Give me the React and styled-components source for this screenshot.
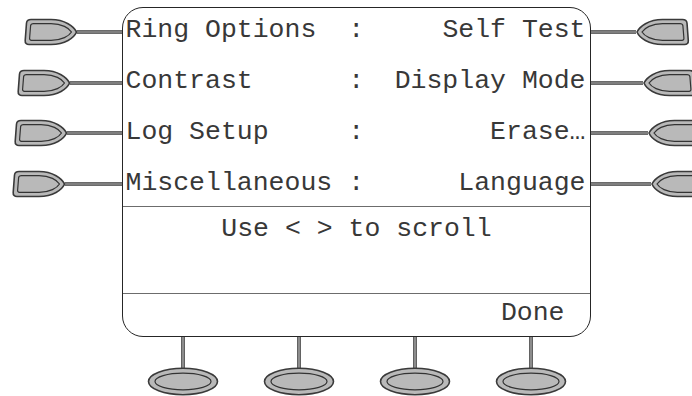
import React from "react";
import styled, { createGlobalStyle } from "styled-components";

const menu = [
  { left: "Ring Options", right: "Self Test" },
  { left: "Contrast", right: "Display Mode" },
  { left: "Log Setup", right: "Erase…" },
  { left: "Miscellaneous", right: "Language" },
];

// horizontal place of each soft key, read off the drawing
const leftKeys = [24, 17, 14, 12];
const rightKeys = [45, 52, 57, 60];
const bottomKeys = [1, 2, 3, 4];

const KEY_OUTER =
  "M7 1 H27 C41 1 50 8 52.5 13.5 C50 19.5 41 26 27 26 H5 C2.5 26 1 24.5 1.2 22 L2.5 4.5 C2.8 2.3 4.5 1 7 1 Z";
const KEY_INNER =
  "M9.5 5.2 H27 C38 5.2 45 9.5 47.5 13.5 C45 17.5 38 21.8 27 21.8 H7.5 C6 21.8 5.5 20.8 5.6 19.8 L6.6 7.2 C6.8 5.9 7.8 5.2 9.5 5.2 Z";

const GlobalStyle = createGlobalStyle`
  html, body {
    margin: 0;
    padding: 0;
    background: #fff;
  }
`;

const Page = styled.div`
  width: 692px;
  height: 396px;
  overflow: hidden;
  display: flex;
  flex-direction: column;
`;

const TopSection = styled.div`
  display: flex;
  align-items: flex-start;
`;

const KeyColumn = styled.div`
  width: ${(p) => p.$width}px;
  flex-shrink: 0;
  display: flex;
  flex-direction: column;
  gap: 4.5px;
  padding-top: 9px;
  overflow: hidden;
`;

const Display = styled.section`
  box-sizing: border-box;
  width: 469px;
  height: 330px;
  margin-top: 7px;
  flex-shrink: 0;
  border: 1.5px solid #262626;
  border-radius: 21px;
  display: flex;
  flex-direction: column;
  font-family: "Courier New", "Liberation Mono", monospace;
  font-size: 26.5px;
  color: #383838;
`;

const Menu = styled.div`
  display: flex;
  flex-direction: column;
  gap: 7px;
  padding: 0 4.5px 1px 2.5px;
`;

const MenuRow = styled.div`
  height: 44px;
  display: flex;
  align-items: center;
  white-space: pre;
`;

const LeftLabel = styled.span`
  width: 14ch;
`;

const Colon = styled.span`
  width: 1ch;
`;

const RightLabel = styled.span`
  flex: 1;
  text-align: right;
`;

const Divider = styled.div`
  height: 0;
  border-top: 1.6px solid #6c6c6c;
`;

const Hint = styled.div`
  flex: 1;
  padding-top: 7px;
  line-height: 30px;
  text-align: center;
  white-space: pre;
`;

const Footer = styled.div`
  height: 42px;
  line-height: 38px;
  text-align: right;
  padding-right: 25.5px;
`;

const BottomRow = styled.div`
  display: flex;
  gap: 44px;
  padding-left: 147px;
`;

const SideKey = ({ x, mirrored, width }) => {
  const tip = mirrored ? x : x + 52.5;
  const transform = mirrored
    ? `translate(${x + 53.5} 9.5) scale(-1 1)`
    : `translate(${x} 9.5)`;
  return (
    <svg width={width} height="46" viewBox={`0 0 ${width} 46`}>
      <line
        x1={mirrored ? 0 : tip}
        x2={mirrored ? tip : width}
        y1="23"
        y2="23"
        stroke="#3a3a3a"
        strokeWidth="3.6"
      />
      <line
        x1={mirrored ? 0 : tip}
        x2={mirrored ? tip : width}
        y1="23"
        y2="23"
        stroke="#c4c4c4"
        strokeWidth="1.2"
      />
      <g transform={transform}>
        <path d={KEY_OUTER} fill="#b9b9b9" stroke="#3a3a3a" strokeWidth="1.6" />
        <path d={KEY_INNER} fill="#b9b9b9" stroke="#333" strokeWidth="1.2" />
      </g>
    </svg>
  );
};

const BottomKey = () => (
  <svg width="72" height="59" viewBox="0 0 72 59">
    <line x1="36" x2="36" y1="0" y2="31.5" stroke="#3a3a3a" strokeWidth="3.6" />
    <line x1="36" x2="36" y1="0" y2="31.5" stroke="#c4c4c4" strokeWidth="1.2" />
    <ellipse cx="36" cy="44.5" rx="34.5" ry="13.2" fill="#b9b9b9" stroke="#3a3a3a" strokeWidth="1.6" />
    <ellipse cx="36" cy="44.5" rx="28" ry="8.3" fill="#b9b9b9" stroke="#333" strokeWidth="1.2" />
  </svg>
);

const App = () => (
  <>
    <GlobalStyle />
    <Page>
      <TopSection>
        <KeyColumn $width={122}>
          {leftKeys.map((x, i) => (
            <SideKey key={i} x={x} width={122} />
          ))}
        </KeyColumn>
        <Display>
          <Menu>
            {menu.map((item) => (
              <MenuRow key={item.left}>
                <LeftLabel>{item.left}</LeftLabel>
                <Colon>:</Colon>
                <RightLabel>{item.right}</RightLabel>
              </MenuRow>
            ))}
          </Menu>
          <Divider />
          <Hint>Use &lt; &gt; to scroll</Hint>
          <Divider />
          <Footer>Done</Footer>
        </Display>
        <KeyColumn $width={101}>
          {rightKeys.map((x, i) => (
            <SideKey key={i} x={x} width={101} mirrored />
          ))}
        </KeyColumn>
      </TopSection>
      <BottomRow>
        {bottomKeys.map((k) => (
          <BottomKey key={k} />
        ))}
      </BottomRow>
    </Page>
  </>
);

export default App;
